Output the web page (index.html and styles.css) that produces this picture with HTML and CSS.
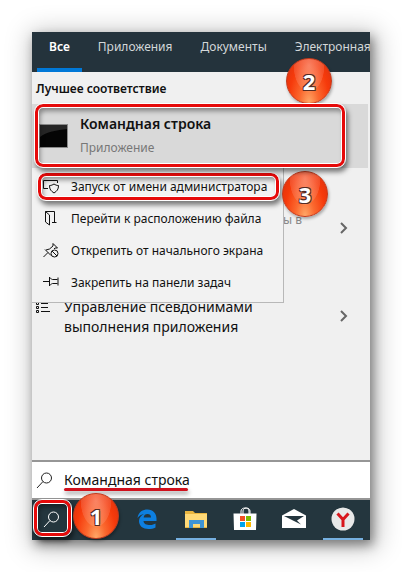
FILE: index.html
```
<!DOCTYPE html>
<html lang="ru">
<head>
    <meta charset="utf-8">
    <title>Командная строка</title>
    <link rel="stylesheet" href="styles.css">
</head>
<body>
    <main class="window">
        <!-- Search filters -->
        <nav class="tabs">
            <button class="tab active">Все</button>
            <button class="tab">Приложения</button>
            <button class="tab">Документы</button>
            <button class="tab">Электронная</button>
        </nav>

        <!-- Results -->
        <section class="results">
            <h2>Лучшее соответствие</h2>
            <div class="best">
                <button class="best-match">
                    <svg class="cmd-icon" viewBox="0 0 29 24">
                        <rect width="29" height="24" fill="#8a8a8a"/>
                        <rect x="1" y="1" width="27" height="22" fill="#050505"/>
                        <path d="M1 1h27v4C18 6 7 8 1 13z" fill="#262626"/>
                    </svg>
                    <span class="best-text">
                        <strong>Командная строка</strong>
                        <span class="kind">Приложение</span>
                    </span>
                </button>
                <div class="badge badge-2">2</div>
                <div class="frame frame-match"></div>
            </div>

            <div class="settings">
                <button class="setting">
                    <span class="setting-text hint">ы в</span>
                    <svg class="chevron" viewBox="0 0 8 12"><path d="M1 1l5 5-5 5"/></svg>
                </button>
                <button class="setting">
                    <svg class="list-icon" viewBox="0 0 14 12">
                        <path d="M.5 .5h2v2h-2zM.5 4.500h2v2h-2zM.5 8.500h2v2h-2z"/>
                        <path d="M5 1.500h7M5 5.500h7M5 9.500h9"/>
                    </svg>
                    <span class="setting-text">Управление псевдонимами выполнения приложения</span>
                    <svg class="chevron" viewBox="0 0 8 12"><path d="M1 1l5 5-5 5"/></svg>
                </button>

                <!-- Context menu -->
                <div class="menu">
                    <button class="menu-item">
                        <svg viewBox="0 0 16 16"><path d="M5 10.500H.5v-8h14V5M6.500 7.500c2 0 3-.6 4.500-1.500 1.500 .9 2.500 1.500 4.500 1.500 0 4-1.500 5.500-4.500 7.500-3-2-4.500-3.500-4.500-7.500z"/></svg>
                        Запуск от имени администратора
                    </button>
                    <button class="menu-item">
                        <svg viewBox="0 0 16 16"><path d="M2.500 1.500v10.500l4 3V5l-4-3.500h9v11h2M9 12.500h3"/></svg>
                        Перейти к расположению файла
                    </button>
                    <button class="menu-item">
                        <svg viewBox="0 0 16 16"><path d="M.5 15L5 10.500M2 7.500l6 6M3 8l3.500-1L10 4V1.500L14.500 6H12l-1 1"/><circle cx="11.500" cy="11.500" r="3.500"/><path d="M9 9l5 5"/></svg>
                        Открепить от начального экрана
                    </button>
                    <button class="menu-item">
                        <svg viewBox="0 0 16 16"><path d="M0 7.500h6M6.500 3v9M6.500 4c1.500 0 2 1.500 3 1.500h5M6.500 11c1.500 0 2-1.500 3-1.500h5M15 3.500v8"/></svg>
                        Закрепить на панели задач
                    </button>
                    <div class="frame frame-admin"></div>
                    <div class="badge badge-3">3</div>
                </div>
            </div>
        </section>

        <!-- Search box -->
        <div class="search">
            <label for="query" aria-label="Поиск">
                <svg viewBox="0 0 17 17"><circle cx="10.500" cy="6" r="5"/><path d="M7 9.500L1 16"/></svg>
            </label>
            <div class="field">
                <input id="query" type="text" value="Командная строка">
                <div class="underline"></div>
            </div>
        </div>

        <!-- Taskbar -->
        <footer class="taskbar">
            <button class="task start-search" aria-label="Поиск">
                <svg class="glass" viewBox="0 0 17 17"><circle cx="10.500" cy="6" r="5"/><path d="M7 9.500L1 16"/></svg>
            </button>
            <button class="task" aria-label="Представление задач"></button>
            <button class="task" aria-label="Edge">
                <svg viewBox="0 0 24 24"><path d="M2.500 11C3.500 4.500 8 2.500 12.500 2.500c5.500 0 9 4 9 9v2.500h-13c.2 3 3 4 6.500 4 2.500 0 4-.6 5.500-1.500v4c-2 1-4.500 1.500-7 1.500-5.500 0-9.500-3-9.500-8 0-3 2-5.500 5-7C6.500 7.500 4 8.500 2.500 11zm6.100-.5H16c0-2.500-1.300-3.500-3.500-3.500S9 8 8.600 10.500z" fill="#0d7fe0"/></svg>
            </button>
            <button class="task running" aria-label="Проводник">
                <svg viewBox="0 0 24 24"><path d="M1 4h8l2 2h12v15H1z" fill="#e9b540"/><path d="M1 7h22v13H1z" fill="#ffd977"/><path d="M5 21v-8h15v8h-4v-4H9v4z" fill="#3f94d5"/></svg>
            </button>
            <button class="task" aria-label="Магазин">
                <svg viewBox="0 0 24 24"><path d="M8 7V4c0-4 8-4 8 0v3M10 7V4c0-4 7-4 7 0v3" fill="none" stroke="#fff"/><path d="M.5 6.500h23L23 23H1z" fill="#fff"/><path d="M7 9h5v5H7z" fill="#f25022"/><path d="M13 9h5v5h-5z" fill="#7fba00"/><path d="M7 15h5v5H7z" fill="#00a4ef"/><path d="M13 15h5v5h-5z" fill="#ffb900"/></svg>
            </button>
            <button class="task" aria-label="Почта">
                <svg viewBox="0 0 24 24"><path d="M0 8.500L12 2l12 6.500V21H0z" fill="#fff"/><path d="M2 9h20l-7 4.500 4 4L2 9z" fill="#24363e"/></svg>
            </button>
            <button class="task running" aria-label="Yandex">
                <svg viewBox="0 0 24 24"><circle cx="12" cy="12" r="11.500" fill="#e8e8e8"/><path d="M6.500 6.500l5.500 6 5.500-6M12 12v8" fill="none" stroke="#d8151b" stroke-width="3"/></svg>
            </button>
            <div class="frame frame-start"></div>
            <div class="badge badge-1">1</div>
        </footer>
    </main>
</body>
</html>
```
FILE: styles.css
```
* {
    box-sizing: border-box;
}

body {
    margin: 0;
    padding: 32px;
    background: #fff;
    font-family: "Noto Sans", "Open Sans", sans-serif;
    color: #111;
}

button {
    border: none;
    padding: 0;
    background: none;
    color: inherit;
    font: inherit;
    text-align: left;
}

svg {
    display: block;
    flex: none;
}

.window {
    display: flex;
    flex-direction: column;
    min-height: calc(100vh - 64px);
    background: #f0f0f0;
    box-shadow: 3px 5px 10px rgba(0, 0, 0, 0.4), 3px 4px 24px 4px rgba(0, 0, 0, 0.25);
}

/* Search filters */
.tabs {
    display: flex;
    gap: 4px;
    height: 40px;
    padding-left: 5px;
    background: #24333c;
    color: #d3d7d9;
    font-size: 12px;
}

.tab {
    flex: none;
    height: 40px;
    padding: 0 12px 8px;
    border-bottom: 4px solid transparent;
}

.tab:last-child {
    padding-right: 0;
}

.tab.active {
    border-color: #0078d7;
    color: #fff;
    font-weight: 600;
}

/* Results */
.results {
    flex: 1;
}

h2 {
    margin: 0;
    padding: 2px 0 0 4px;
    font-size: 12px;
    font-weight: 600;
    line-height: 30px;
}

.best {
    position: relative;
    padding-right: 2px;
}

.best-match {
    display: flex;
    align-items: center;
    gap: 12px;
    width: 100%;
    height: 64px;
    padding-left: 7px;
    background: #d9d9d9;
}

.cmd-icon {
    width: 29px;
    height: 24px;
}

.best-text {
    display: flex;
    flex-direction: column;
    font-size: 14px;
    line-height: 24px;
}

.best-text strong {
    font-weight: 600;
}

.kind {
    color: #777;
    font-size: 12px;
}

.settings {
    position: relative;
    padding-top: 16px;
    font-size: 14px;
}

.setting {
    display: flex;
    align-items: center;
    width: 100%;
    height: 88px;
    padding: 0 22px 0 4px;
    line-height: 20px;
}

.list-icon {
    width: 14px;
    height: 12px;
    margin-bottom: 16px;
    fill: none;
    stroke: #111;
}

.setting-text {
    flex: 1;
    padding: 2px 72px 0 14px;
}

.hint {
    padding: 0 0 16px 247px;
    color: #888;
    font-size: 12px;
}

.chevron {
    width: 8px;
    height: 12px;
    fill: none;
    stroke: #666;
    stroke-width: 2;
}

/* Context menu */
.menu {
    position: absolute;
    top: 0;
    left: 0;
    width: 252px;
    padding: 2px 0 4px;
    border-right: 1px solid #b8b8b8;
    border-bottom: 1px solid #b8b8b8;
    background: #f2f2f2;
    font-size: 12px;
}

.menu-item {
    display: flex;
    align-items: center;
    gap: 12px;
    width: 100%;
    height: 32px;
    padding-left: 11px;
    white-space: nowrap;
}

.menu-item svg {
    width: 16px;
    height: 16px;
    fill: none;
    stroke: #111;
}

/* Search box */
.search {
    display: flex;
    height: 40px;
    padding-left: 4px;
    gap: 11px;
    align-items: center;
    border-top: 2px solid #969696;
    border-bottom: 2px solid #969696;
    background: #fff;
}

.search svg,
.glass {
    width: 17px;
    height: 17px;
    fill: none;
    stroke: #222;
}

.field {
    position: relative;
    flex: 1;
}

.field input {
    display: block;
    width: 100%;
    padding: 0;
    border: none;
    outline: none;
    background: none;
    color: #111;
    font: 14px/20px "Noto Sans", "Open Sans", sans-serif;
}

.underline {
    position: absolute;
    bottom: -1px;
    left: 0;
    width: 124px;
    height: 3px;
    border-radius: 2px;
    background: #d0101c;
    box-shadow: 1px 3px 4px rgba(0, 0, 0, 0.4);
}

/* Taskbar */
.taskbar {
    position: relative;
    display: flex;
    gap: 9px;
    height: 40px;
    padding-left: 2px;
    background: #24363e;
}

.task {
    display: flex;
    align-items: center;
    justify-content: center;
    width: 40px;
    height: 40px;
    border-bottom: 2px solid transparent;
}

.start-search {
    width: 35px;
}

.task.running {
    border-color: #76b0e0;
}

.task svg {
    width: 24px;
    height: 24px;
}

.task .glass {
    width: 17px;
    height: 17px;
    stroke: #fff;
}

/* Red frames and numbered steps */
.frame {
    position: absolute;
    border: 3px solid #e60a0a;
    border-radius: 8px;
    outline: 1px solid #fff;
    box-shadow: 2px 4px 5px 1px rgba(0, 0, 0, 0.5), inset 0 0 0 1px #fff, inset 2px 4px 5px rgba(0, 0, 0, 0.4);
    pointer-events: none;
}

.frame-match {
    inset: 0 25px 1px 3px;
    z-index: 2;
}

.frame-admin {
    inset: 5px 4px auto 6px;
    height: 27px;
}

.frame-start {
    top: 0;
    left: 2px;
    width: 37px;
    height: 36px;
}

.badge {
    position: absolute;
    z-index: 1;
    width: 46px;
    height: 46px;
    border: 1px solid #c4391c;
    border-radius: 50%;
    background:
        radial-gradient(ellipse at 50% 15%, rgba(255, 255, 255, 0.35) 0, rgba(255, 255, 255, 0.12) 48%, transparent 50%),
        radial-gradient(ellipse at 50% 100%, #ffa868 0, #fb6a30 30%, #f63a0b 65%, #d8300e 100%);
    box-shadow: 1px 2px 3px rgba(0, 0, 0, 0.3);
    color: #fff;
    font-size: 22px;
    font-weight: 700;
    line-height: 44px;
    text-align: center;
    text-shadow: 1px 1px #542b23, -1px 1px #542b23, 1px -1px #542b23, -1px -1px #542b23;
}

.badge-1 {
    top: -7px;
    left: 41px;
}

.badge-2 {
    top: -46px;
    right: 38px;
}

.badge-3 {
    top: 3px;
    right: -45px;
}
```
